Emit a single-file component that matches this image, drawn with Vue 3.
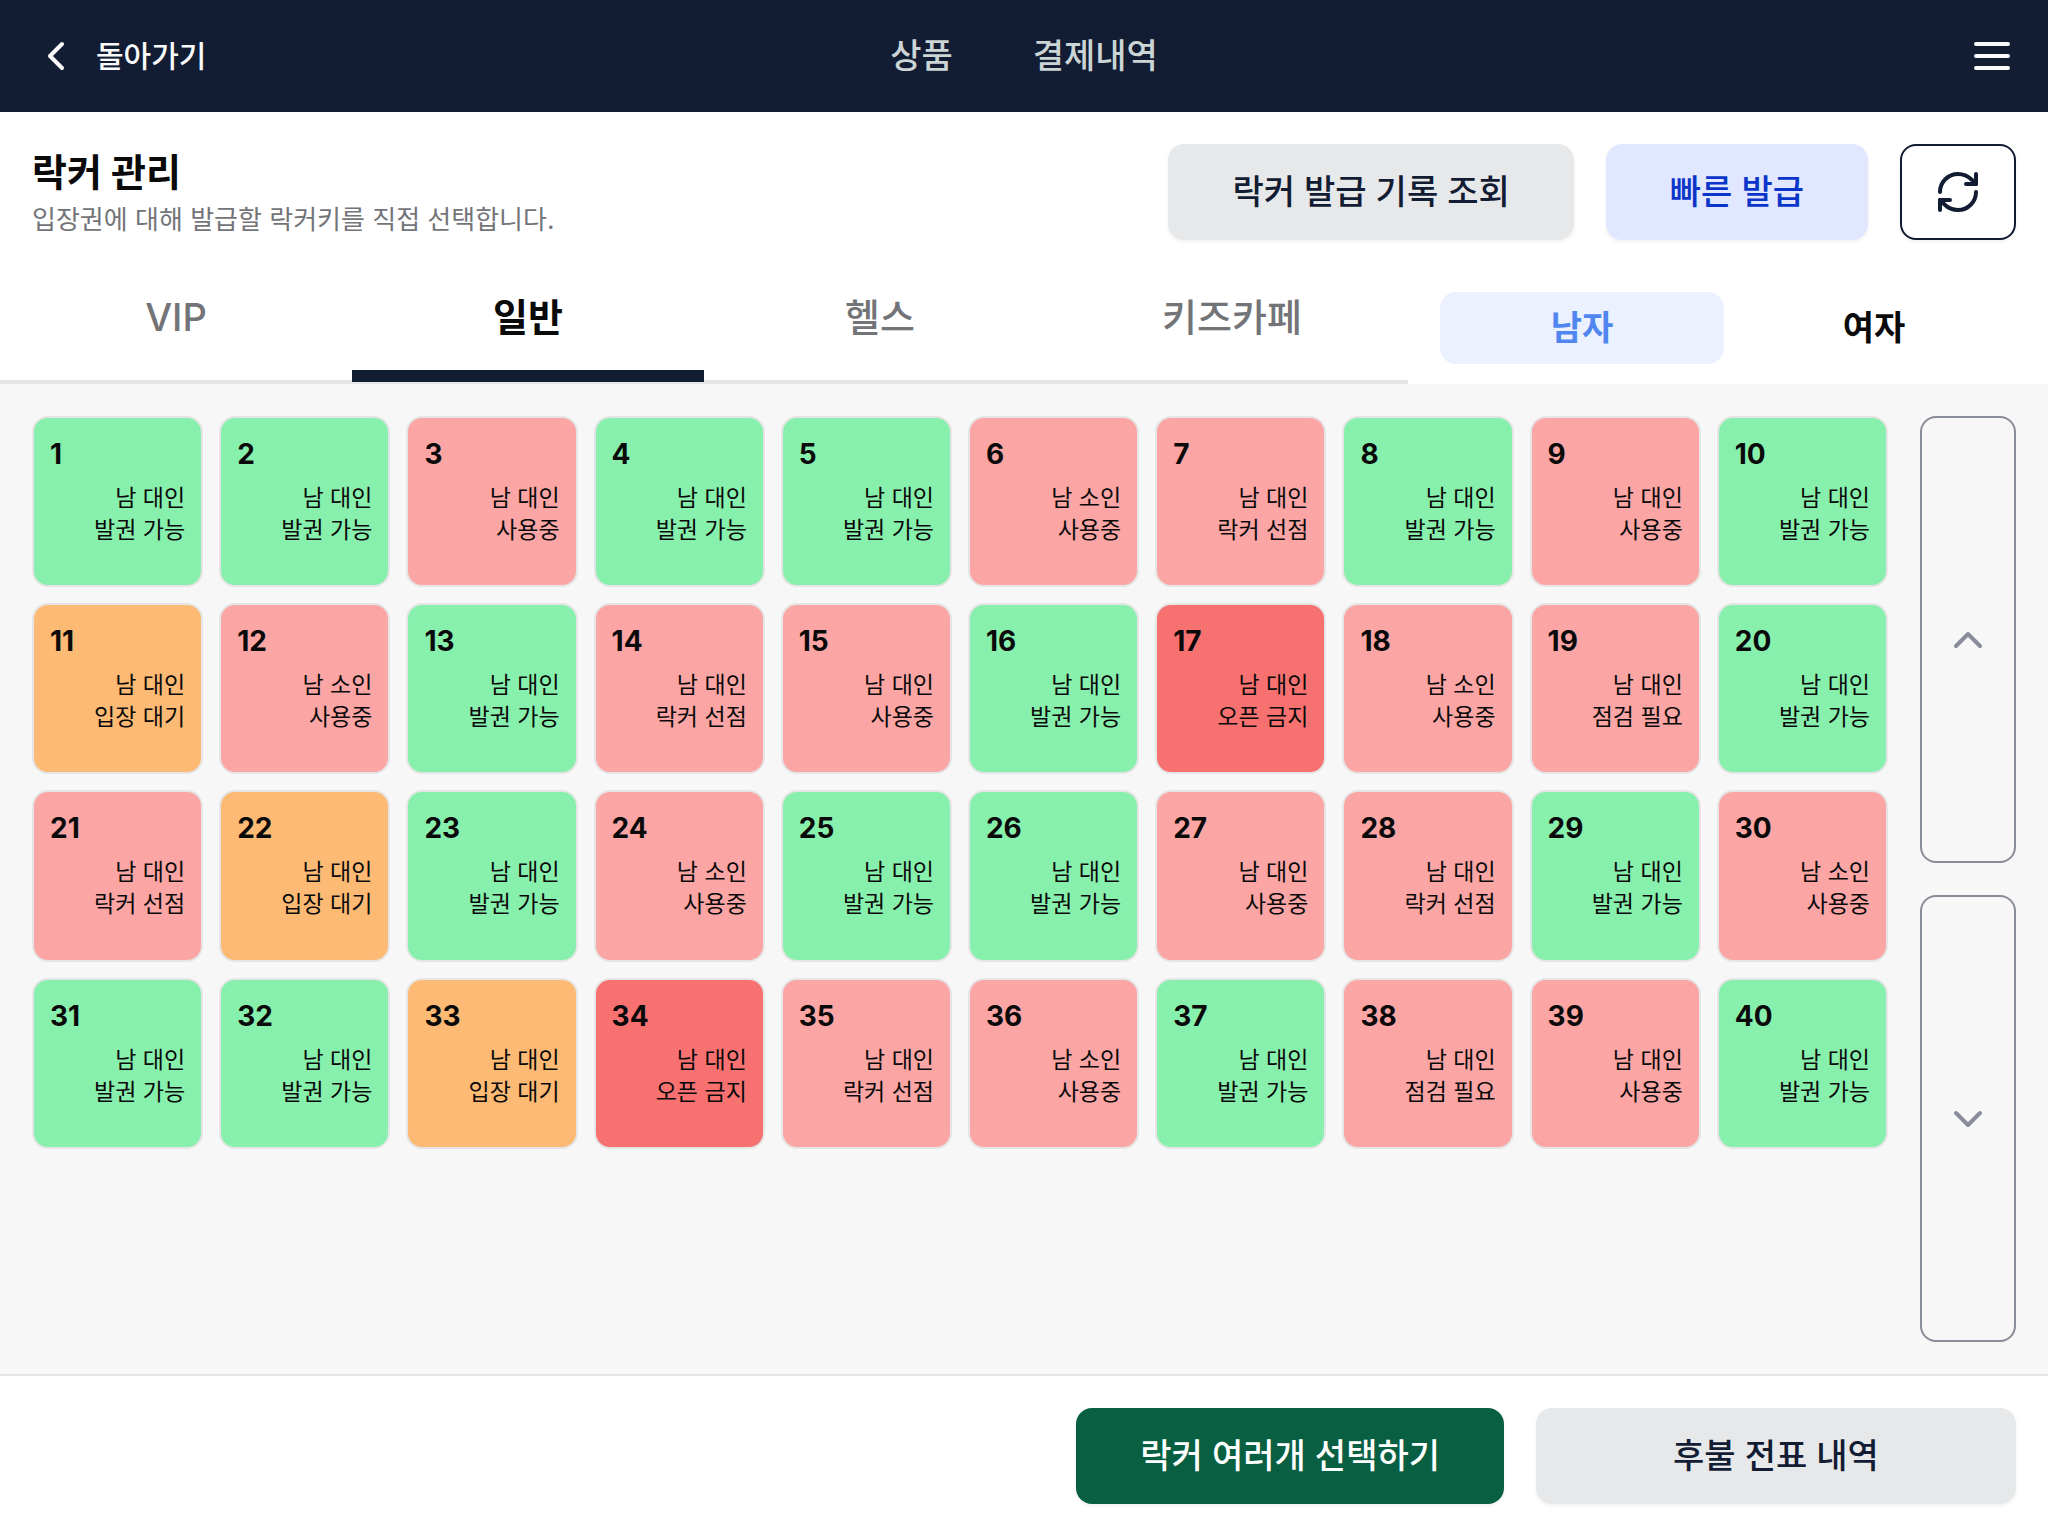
<script setup>
import { ref, computed } from 'vue'

const tabs = ['VIP', '일반', '헬스', '키즈카페']
const genders = ['남자', '여자']
const activeTab = ref('일반')
const activeGender = ref('남자')

const statusClass = {
  '발권 가능': 'available',
  '사용중': 'occupied',
  '락커 선점': 'occupied',
  '점검 필요': 'occupied',
  '입장 대기': 'waiting',
  '오픈 금지': 'blocked',
}

const statuses = [
  '발권 가능', '발권 가능', '사용중', '발권 가능', '발권 가능', '사용중', '락커 선점', '발권 가능', '사용중', '발권 가능',
  '입장 대기', '사용중', '발권 가능', '락커 선점', '사용중', '발권 가능', '오픈 금지', '사용중', '점검 필요', '발권 가능',
  '락커 선점', '입장 대기', '발권 가능', '사용중', '발권 가능', '발권 가능', '사용중', '락커 선점', '발권 가능', '사용중',
  '발권 가능', '발권 가능', '입장 대기', '오픈 금지', '락커 선점', '사용중', '발권 가능', '점검 필요', '사용중', '발권 가능',
]
const childLockers = [6, 12, 18, 24, 30, 36]

const lockers = computed(() =>
  statuses.map((status, i) => ({
    number: i + 1,
    type: childLockers.includes(i + 1) ? '남 소인' : '남 대인',
    status,
  })),
)
</script>

<template>
  <div class="page">
    <header class="topbar">
      <button class="back" type="button">
        <svg class="icon" viewBox="0 0 24 24" aria-hidden="true"><path d="m15 18-6-6 6-6" /></svg>
        <span>돌아가기</span>
      </button>
      <nav class="nav">
        <a href="#products">상품</a>
        <a href="#payments">결제내역</a>
      </nav>
      <button class="menu" type="button" aria-label="메뉴">
        <svg class="icon" viewBox="0 0 24 24" aria-hidden="true"><path d="M4 6h16M4 12h16M4 18h16" /></svg>
      </button>
    </header>

    <section class="heading">
      <div class="titles">
        <h1>락커 관리</h1>
        <p>입장권에 대해 발급할 락커키를 직접 선택합니다.</p>
      </div>
      <div class="actions">
        <button class="btn secondary" type="button">락커 발급 기록 조회</button>
        <button class="btn quick" type="button">빠른 발급</button>
        <button class="btn refresh" type="button" aria-label="새로고침">
          <svg class="icon" viewBox="0 0 24 24" aria-hidden="true">
            <path d="M3 12a9 9 0 0 1 9-9 9.75 9.75 0 0 1 6.74 2.74L21 8" />
            <path d="M21 3v5h-5" />
            <path d="M21 12a9 9 0 0 1-9 9 9.75 9.75 0 0 1-6.74-2.74L3 16" />
            <path d="M8 16H3v5" />
          </svg>
        </button>
      </div>
    </section>

    <div class="filters">
      <div class="tabs" role="tablist">
        <button
          v-for="tab in tabs"
          :key="tab"
          class="tab"
          :class="{ active: tab === activeTab }"
          type="button"
          role="tab"
          :aria-selected="tab === activeTab"
          @click="activeTab = tab"
        >{{ tab }}</button>
      </div>
      <div class="genders">
        <button
          v-for="gender in genders"
          :key="gender"
          class="gender"
          :class="{ active: gender === activeGender }"
          type="button"
          :aria-pressed="gender === activeGender"
          @click="activeGender = gender"
        >{{ gender }}</button>
      </div>
    </div>

    <main class="content">
      <div class="grid">
        <button
          v-for="locker in lockers"
          :key="locker.number"
          class="locker"
          :class="statusClass[locker.status]"
          type="button"
        >
          <span class="number">{{ locker.number }}</span>
          <span class="label">{{ locker.type }}</span>
          <span class="label">{{ locker.status }}</span>
        </button>
      </div>
      <div class="pager">
        <button class="page-btn" type="button" aria-label="이전 페이지">
          <svg class="icon" viewBox="0 0 24 24" aria-hidden="true"><path d="m18 15-6-6-6 6" /></svg>
        </button>
        <button class="page-btn" type="button" aria-label="다음 페이지">
          <svg class="icon" viewBox="0 0 24 24" aria-hidden="true"><path d="m6 9 6 6 6-6" /></svg>
        </button>
      </div>
    </main>

    <footer class="footer">
      <button class="btn primary" type="button">락커 여러개 선택하기</button>
      <button class="btn secondary slip" type="button">후불 전표 내역</button>
    </footer>
  </div>
</template>

<style>
body {
  margin: 0;
}
</style>

<style scoped>
.page {
  display: flex;
  flex-direction: column;
  min-height: 100vh;
  background: #fff;
  color: #0a0a0a;
  font-family: Inter, "Noto Sans CJK KR", sans-serif;
}

button {
  margin: 0;
  padding: 0;
  border: 0;
  background: none;
  color: inherit;
  font: inherit;
  cursor: pointer;
}

.icon {
  display: block;
  width: 48px;
  height: 48px;
  flex: none;
  fill: none;
  stroke: currentColor;
  stroke-width: 2;
  stroke-linecap: round;
  stroke-linejoin: round;
}

.topbar {
  display: grid;
  grid-template-columns: 1fr auto 1fr;
  align-items: center;
  height: 112px;
  padding: 0 32px;
  background: #121c33;
  color: #fafafa;
}

.back {
  display: flex;
  align-items: center;
  justify-self: start;
  gap: 16px;
  font-size: 30px;
  font-weight: 500;
  line-height: 40px;
}

.nav {
  display: flex;
  gap: 80px;
  font-size: 34px;
  font-weight: 500;
  line-height: 48px;
}

.nav a {
  color: #cbd5d5;
  text-decoration: none;
}

.menu {
  justify-self: end;
}

.heading {
  display: flex;
  align-items: flex-start;
  justify-content: space-between;
  padding: 32px 32px 24px;
}

h1 {
  margin: 0;
  font-size: 38px;
  font-weight: 700;
  line-height: 56px;
}

.heading p {
  margin: 0;
  color: #737478;
  font-size: 26px;
  line-height: 40px;
}

.actions {
  display: flex;
  gap: 32px;
}

.btn {
  height: 96px;
  padding: 0 64px;
  border-radius: 16px;
  box-shadow: 0 2px 4px rgba(0, 0, 0, 0.06);
  font-size: 34px;
  font-weight: 500;
  line-height: 48px;
}

.secondary {
  background: #e6e8ea;
  color: #121c33;
}

.quick {
  background: #e0e7ff;
  color: #0a35c8;
}

.refresh {
  padding: 0 32px;
  border: 2px solid #121c33;
  background: #fff;
  color: #121c33;
}

.primary {
  background: #085f42;
  color: #fff;
}

.filters {
  display: grid;
  grid-template-columns: minmax(0, 11fr) minmax(0, 5fr);
  height: 120px;
}

.tabs {
  display: flex;
  border-bottom: 4px solid #e5e5e5;
}

.tab {
  position: relative;
  flex: 1;
  padding-bottom: 10px;
  color: #737478;
  font-size: 38px;
  font-weight: 500;
  line-height: 48px;
}

.tab.active {
  color: #0a0a0a;
  font-weight: 700;
}

.tab.active::after {
  content: "";
  position: absolute;
  right: 0;
  bottom: -2px;
  left: 0;
  height: 12px;
  background: #121c33;
}

.genders {
  display: flex;
  align-items: center;
  gap: 8px;
  padding: 8px 32px 0;
}

.gender {
  flex: 1;
  height: 72px;
  border-radius: 16px;
  font-size: 34px;
  font-weight: 600;
  line-height: 48px;
}

.gender.active {
  background: #ebf1fe;
  color: #4f86f0;
}

.content {
  display: flex;
  flex: 1;
  gap: 32px;
  padding: 32px;
  border-bottom: 2px solid #e5e5e5;
  background: #f7f7f7;
}

.grid {
  display: grid;
  flex: 1;
  grid-template-columns: repeat(10, minmax(0, 1fr));
  align-content: start;
  gap: 16px;
}

.locker {
  display: flex;
  flex-direction: column;
  align-items: flex-end;
  box-sizing: border-box;
  aspect-ratio: 1;
  padding: 16px;
  border: 2px solid #e5e5e5;
  border-radius: 16px;
}

.number {
  align-self: flex-start;
  margin-bottom: 8px;
  font-size: 28px;
  font-weight: 700;
  line-height: 40px;
}

.label {
  font-size: 23px;
  line-height: 32px;
}

.available {
  background: #88f0ad;
}

.occupied {
  background: #fba5a5;
}

.waiting {
  background: #fdba74;
}

.blocked {
  background: #f87171;
}

.pager {
  display: flex;
  flex-direction: column;
  width: 96px;
  gap: 32px;
}

.page-btn {
  display: flex;
  flex: 1;
  align-items: center;
  justify-content: center;
  border: 2px solid #888d99;
  border-radius: 16px;
  color: #888d99;
}

.footer {
  display: flex;
  justify-content: flex-end;
  gap: 32px;
  padding: 32px;
}

.slip {
  width: 480px;
}
</style>
